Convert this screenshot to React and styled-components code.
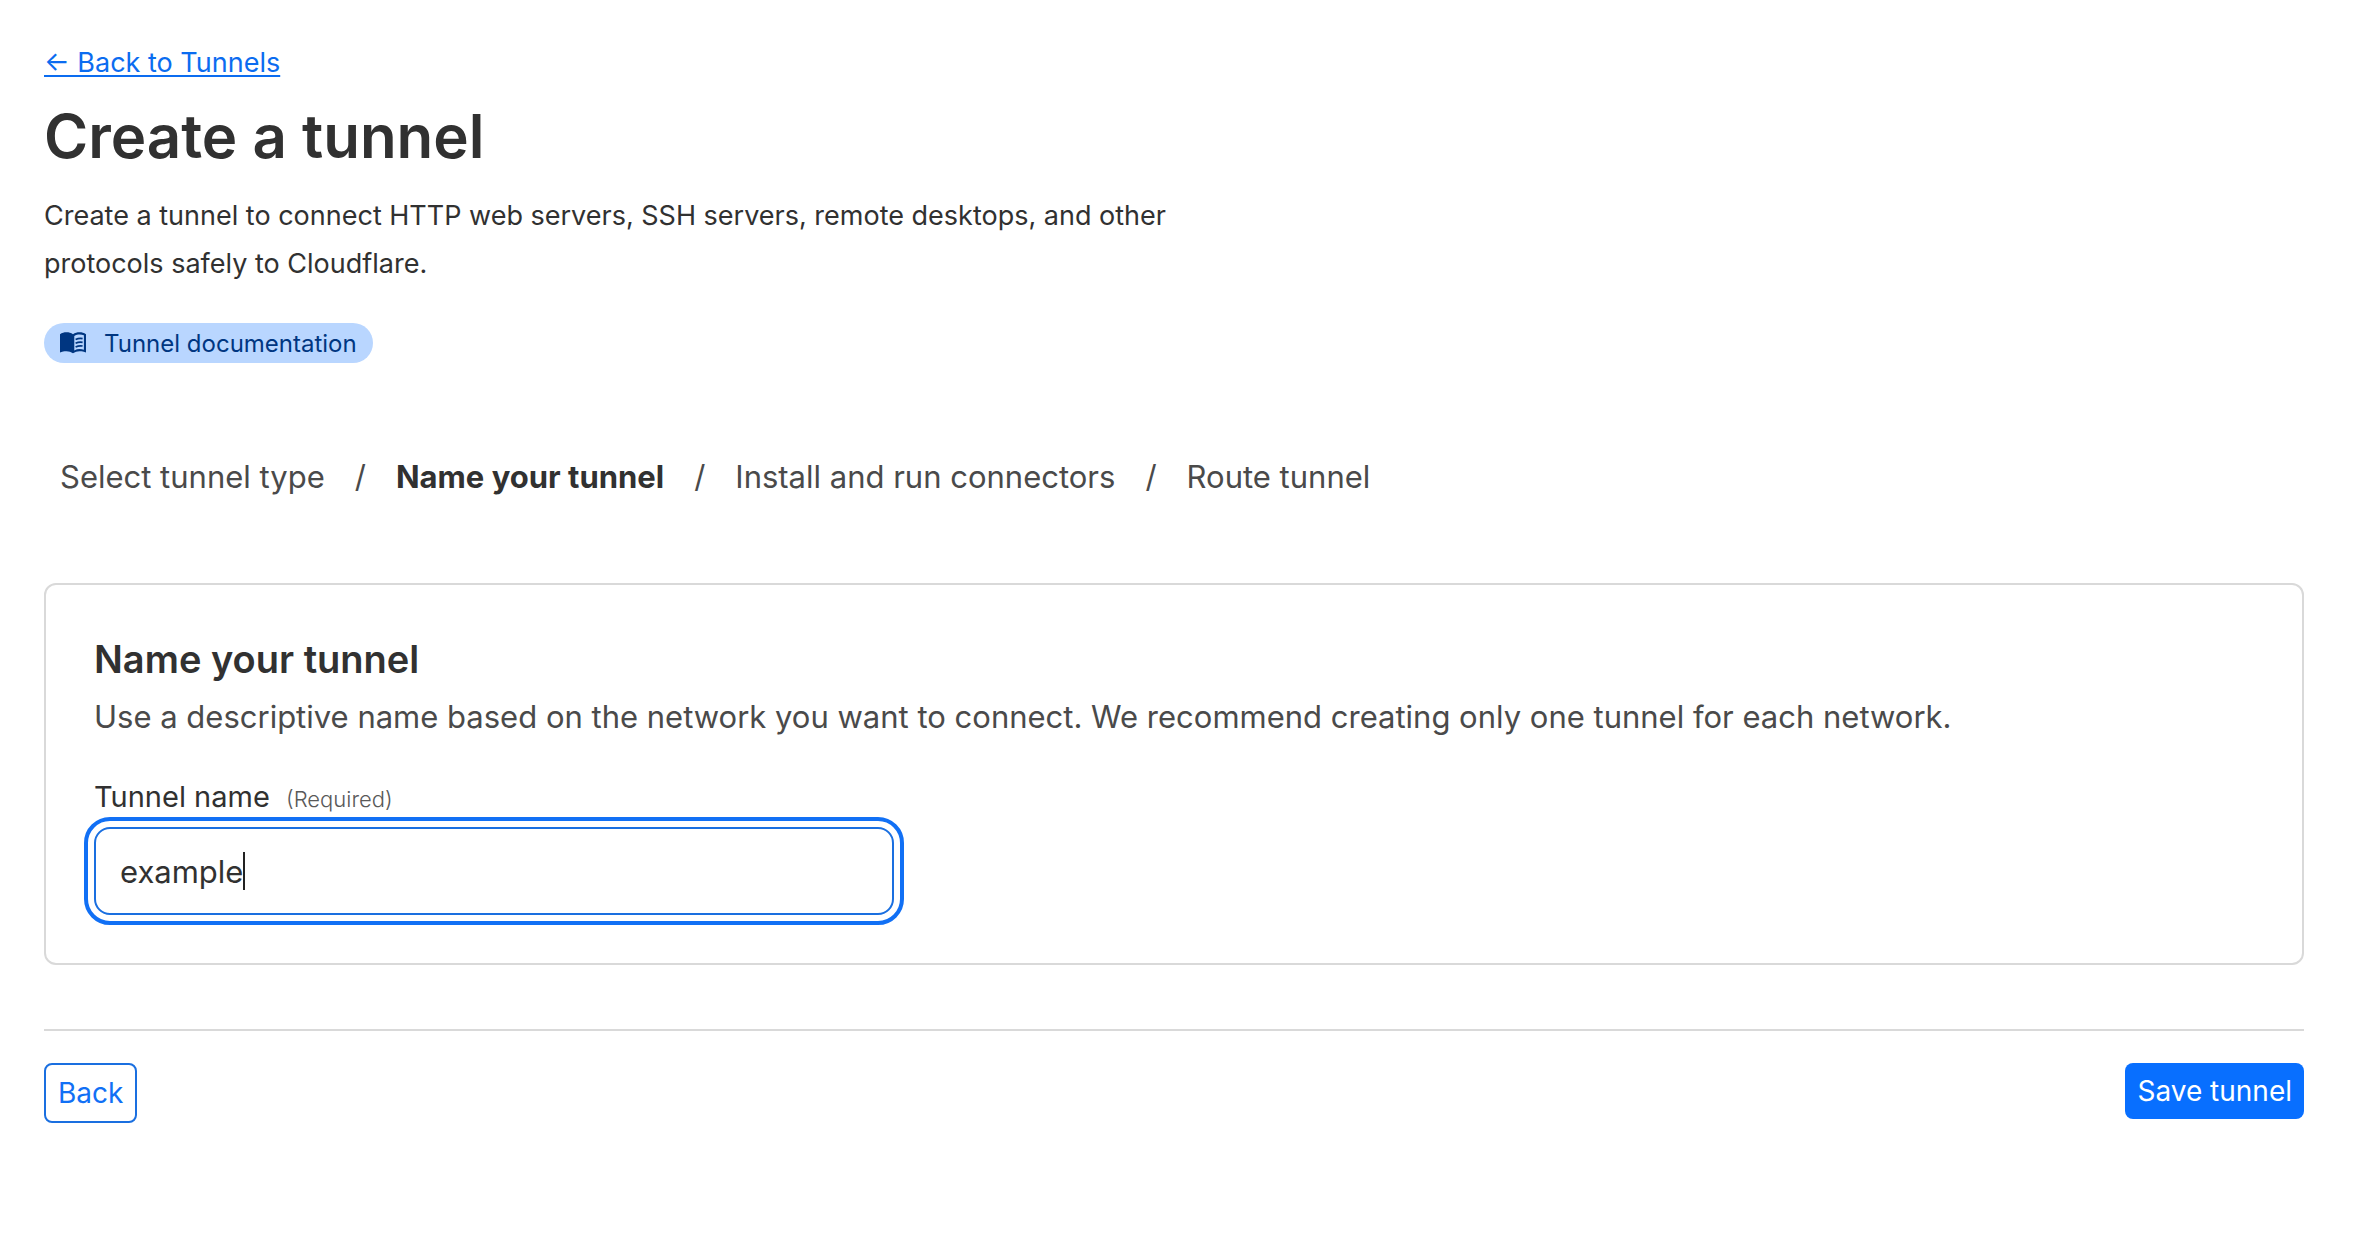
import React, { useLayoutEffect, useRef, useState } from "react";
import styled, { createGlobalStyle } from "styled-components";

const steps = [
  "Select tunnel type",
  "Name your tunnel",
  "Install and run connectors",
  "Route tunnel",
];

const BookIcon = () => (
  <svg width="26" height="22" viewBox="0 0 26 22" aria-hidden="true">
    <path
      fill="currentColor"
      d="M0 2.2C2 .8 4 .3 6.500 .3 9 .3 11 .9 13 2.200 15 .9 17 .3 19.500 .3 22 .3 24 .8 26 2.200V20.500C24 19.600 22 19.200 19.500 19.200 17 19.200 15 20 13 21.200 11 20 9 19.200 6.500 19.200 4 19.200 2 19.600 0 20.500Z"
    />
    <path
      fill="#b9d6ff"
      d="M14.300 3.900C16 2.900 17.800 2.500 19.500 2.500 21.200 2.500 22.600 2.700 23.900 3.300V17.700C22.600 17.300 21.200 17.100 19.500 17.100 17.700 17.100 16 17.600 14.300 18.500Z"
    />
    <path
      fill="none"
      stroke="currentColor"
      strokeWidth="1.7"
      d="M15.600 7.600C18 6.400 20.500 6.200 22.600 6.600M15.600 11.300C18 10.100 20.500 9.900 22.600 10.300M15.600 15C18 13.800 20.500 13.600 22.600 14"
    />
  </svg>
);

export default function App() {
  const [name, setName] = useState("example");
  const [caretOffset, setCaretOffset] = useState(0);
  const inputRef = useRef(null);

  const updateCaret = () => {
    const input = inputRef.current;
    const context = document.createElement("canvas").getContext("2d");
    context.font = getComputedStyle(input).font;
    const typed = input.value.slice(0, input.selectionEnd);
    setCaretOffset(Math.round(context.measureText(typed).width));
  };

  useLayoutEffect(() => {
    const input = inputRef.current;
    input.focus();
    input.setSelectionRange(input.value.length, input.value.length);
    updateCaret();
  }, []);

  return (
    <Page>
      <GlobalStyle />
      <BackLink href="#tunnels">← Back to Tunnels</BackLink>
      <Title>Create a tunnel</Title>
      <Intro>
        Create a tunnel to connect HTTP web servers, SSH servers, remote
        desktops, and other protocols safely to Cloudflare.
      </Intro>
      <DocsLink href="#docs">
        <BookIcon />
        Tunnel documentation
      </DocsLink>

      <Steps>
        {steps.map((step, index) => (
          <Step key={step} $active={index === 1}>
            {step}
          </Step>
        ))}
      </Steps>

      <form onSubmit={(e) => e.preventDefault()}>
        <Card>
          <CardTitle>Name your tunnel</CardTitle>
          <CardText>
            Use a descriptive name based on the network you want to connect. We
            recommend creating only one tunnel for each network.
          </CardText>
          <Label htmlFor="tunnel-name">
            Tunnel name <Required>(Required)</Required>
          </Label>
          <InputWrapper>
            <Input
              id="tunnel-name"
              type="text"
              autoComplete="off"
              spellCheck={false}
              required
              ref={inputRef}
              value={name}
              onChange={(e) => {
                setName(e.target.value);
                updateCaret();
              }}
              onSelect={updateCaret}
            />
            <Caret style={{ marginLeft: caretOffset }} />
          </InputWrapper>
        </Card>
        <Footer>
          <BackButton type="button">Back</BackButton>
          <SaveButton type="submit">Save tunnel</SaveButton>
        </Footer>
      </form>
    </Page>
  );
}

const GlobalStyle = createGlobalStyle`
  *, *::before, *::after {
    box-sizing: border-box;
  }

  body {
    margin: 0;
    background: #fff;
    color: #313131;
    font-family: Inter, "Liberation Sans", sans-serif;
    font-size: 27px;
  }

  button, input {
    font-family: inherit;
  }
`;

const Page = styled.main`
  padding: 40px 56px 40px 44px;
`;

const BackLink = styled.a`
  display: table;
  color: #0b6cf0;
  line-height: 46px;
  text-underline-offset: 3px;
  text-decoration-thickness: 2px;
`;

const Title = styled.h1`
  margin: 10px 0 0;
  font-size: 60px;
  font-weight: 600;
  line-height: 80px;
`;

const Intro = styled.p`
  max-width: 1160px;
  margin: 16px 0 0;
  line-height: 48px;
`;

const DocsLink = styled.a`
  display: flex;
  align-items: center;
  gap: 18px;
  width: fit-content;
  height: 40px;
  margin-top: 35px;
  padding: 0 16px;
  border-radius: 20px;
  background: #b9d6ff;
  color: #003681;
  font-size: 24px;
  text-decoration: none;
`;

const Steps = styled.ol`
  display: flex;
  margin: 92px 0 84px;
  padding: 0 16px;
  list-style: none;
  color: #4a4a4a;
  font-size: 31px;
  line-height: 44px;
`;

const Step = styled.li`
  color: ${({ $active }) => ($active ? "#313131" : "inherit")};
  font-weight: ${({ $active }) => ($active ? 700 : 400)};

  &:not(:first-child)::before {
    content: "/";
    margin: 0 30px;
    color: #4a4a4a;
    font-weight: 400;
  }
`;

const Card = styled.section`
  padding: 48px;
  border: 2px solid #d9d9d9;
  border-radius: 12px;
`;

const CardTitle = styled.h2`
  margin: 0;
  font-size: 38px;
  font-weight: 600;
  line-height: 52px;
`;

const CardText = styled.p`
  margin: 8px 0 0;
  color: #4a4a4a;
  font-size: 31px;
  line-height: 48px;
`;

const Label = styled.label`
  display: block;
  margin-top: 32px;
  font-size: 29px;
  line-height: 48px;
`;

const Required = styled.span`
  margin-left: 8px;
  color: #595959;
  font-size: 22px;
  font-weight: 300;
  line-height: 1;
`;

const InputWrapper = styled.div`
  position: relative;
  max-width: 800px;
  margin-top: 6px;
`;

const Input = styled.input`
  display: block;
  width: 100%;
  height: 88px;
  padding: 0 24px;
  border: 2px solid #1a6fe0;
  border-radius: 16px;
  background: #fff;
  color: #313131;
  caret-color: transparent;
  font-size: 31px;

  &:focus {
    outline: 4px solid #1170f5;
    outline-offset: 6px;
  }
`;

const Caret = styled.span`
  position: absolute;
  top: 25px;
  left: 26px;
  width: 2px;
  height: 38px;
  background: #222;
  opacity: 0;

  ${Input}:focus + & {
    opacity: 1;
  }
`;

const Footer = styled.footer`
  display: flex;
  align-items: flex-start;
  justify-content: space-between;
  margin-top: 64px;
  padding-top: 32px;
  border-top: 2px solid #d9d9d9;
`;

const Button = styled.button`
  height: 56px;
  padding: 0 12px;
  border: none;
  border-radius: 8px;
  font-size: 28px;
  cursor: pointer;
`;

const BackButton = styled(Button)`
  height: 60px;
  border: 2px solid #1a6fe0;
  background: #fff;
  color: #1170f5;
`;

const SaveButton = styled(Button)`
  background: #086fff;
  color: #fff;
`;
